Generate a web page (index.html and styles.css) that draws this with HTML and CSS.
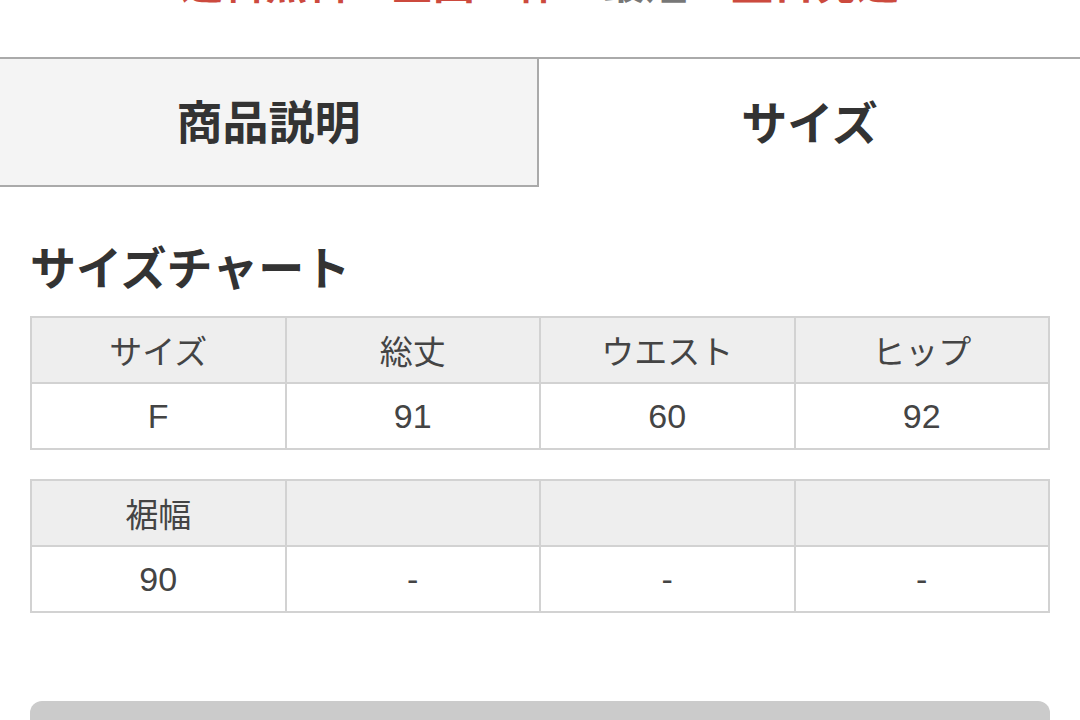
FILE: index.html
```html
<!DOCTYPE html>
<html lang="ja">
<head>
<meta charset="utf-8">
<link rel="stylesheet" href="styles.css">
</head>
<body>
<div class="notice">
  <p class="notice-text"><span class="red">送料無料・全国一律</span><span class="gray">最短</span><span class="red">翌日発送</span></p>
</div>
<div class="tabs">
  <div class="tab tab-off">商品説明</div>
  <div class="tab tab-on">サイズ</div>
</div>
<section class="content">
  <h2 class="chart-title">サイズチャート</h2>
  <table class="size-table">
    <tr class="head"><td>サイズ</td><td>総丈</td><td>ウエスト</td><td>ヒップ</td></tr>
    <tr><td>F</td><td>91</td><td>60</td><td>92</td></tr>
  </table>
  <table class="size-table">
    <tr class="head"><td>裾幅</td><td></td><td></td><td></td></tr>
    <tr><td>90</td><td>-</td><td>-</td><td>-</td></tr>
  </table>
  <div class="bottom-btn"></div>
</section>
</body>
</html>
```
FILE: styles.css
```css
* { box-sizing: border-box; }
html, body { margin: 0; padding: 0; background: #fff; }
body {
  font-family: "Liberation Sans", "Noto Sans CJK JP", sans-serif;
  color: #333;
  overflow: hidden;
}
.notice {
  height: 57px;
  overflow: hidden;
}
.notice-text {
  margin: -35px 0 0 0;
  font-size: 42px;
  line-height: 40px;
  font-weight: bold;
  text-align: center;
  white-space: nowrap;
}
.red { color: #cc4a3e; }
.gray { color: #777; margin: 0 44px; }
.tabs {
  display: flex;
  border-top: 2px solid #aaa;
}
.tab {
  height: 128px;
  padding-bottom: 6px;
  display: flex;
  align-items: center;
  justify-content: center;
  font-family: "Noto Sans CJK JP", sans-serif;
  font-size: 46px;
  font-weight: bold;
  color: #333;
}
.tab-off {
  width: 539px;
  background: #f4f4f4;
  border-right: 2px solid #aaa;
  border-bottom: 2px solid #aaa;
}
.tab-on {
  flex: 1;
  background: #fff;
}
.content {
  padding: 48px 30px 0;
}
.chart-title {
  margin: 0 0 21px 0;
  font-family: "Noto Sans CJK JP", sans-serif;
  font-size: 46px;
  line-height: 60px;
  font-weight: bold;
  color: #333;
}
.size-table {
  width: 1020px;
  table-layout: fixed;
  border-collapse: collapse;
  margin-bottom: 29px;
}
.size-table td {
  border: 2px solid #d2d2d2;
  height: 66px;
  padding: 0;
  text-align: center;
  vertical-align: middle;
  font-size: 34px;
  color: #444;
}
.size-table .head td {
  background: #eeeeee;
  font-family: "Noto Sans CJK JP", sans-serif;
  font-size: 33px;
}
.bottom-btn {
  margin-top: 88px;
  height: 100px;
  background: #cbcbcb;
  border-radius: 12px;
}
```
